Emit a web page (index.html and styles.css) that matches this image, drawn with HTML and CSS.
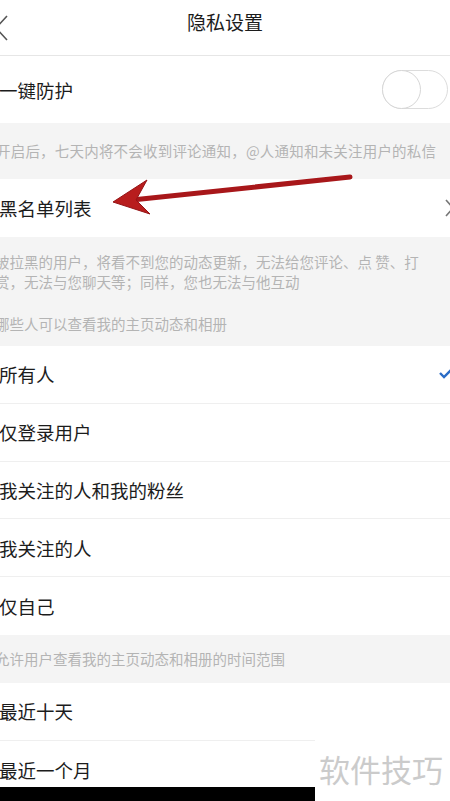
FILE: index.html
```html
<!DOCTYPE html>
<html>

<head>
    <title>隐私设置</title>
    <link rel="stylesheet" href="styles.css">
</head>

<body>
    <div class="page">
        <div class="nav">
            <svg class="back" width="12" height="28" viewBox="0 0 12 28">
                <polyline points="7,10 -4,22 7,34" transform="translate(0,-8)" fill="none" stroke="#555" stroke-width="1.6" />
            </svg>
            <div class="title">隐私设置</div>
            <span></span>
        </div>

        <div class="row row-tall">
            <span class="label">一键防护</span>
            <div class="switch"><span class="knob"></span></div>
        </div>
        <div class="tip tip-wide">开启后，七天内将不会收到评论通知，@人通知和未关注用户的私信</div>

        <div class="row">
            <span class="label">黑名单列表</span>
            <svg class="more" width="8" height="18" viewBox="0 0 8 18">
                <polyline points="1,1 8,9 1,17" fill="none" stroke="#777" stroke-width="1.6" />
            </svg>
        </div>
        <div class="tip desc">被拉黑的用户，将看不到您的动态更新，无法给您评论、点 赞、打<br>赏，无法与您聊天等；同样，您也无法与他互动</div>
        <div class="tip section">哪些人可以查看我的主页动态和相册</div>

        <div class="list">
            <div class="row opt">
                <span class="label">所有人</span>
                <svg class="check" width="14" height="12" viewBox="0 0 14 12">
                    <polyline points="1,5 5,9 13,1" fill="none" stroke="#2a6cc6" stroke-width="2.4" />
                </svg>
            </div>
            <div class="row opt"><span class="label">仅登录用户</span></div>
            <div class="row opt"><span class="label">我关注的人和我的粉丝</span></div>
            <div class="row opt"><span class="label">我关注的人</span></div>
            <div class="row opt"><span class="label">仅自己</span></div>
        </div>
        <div class="tip section-short">允许用户查看我的主页动态和相册的时间范围</div>

        <div class="list">
            <div class="row opt"><span class="label">最近十天</span></div>
            <div class="row opt"><span class="label">最近一个月</span></div>
        </div>

        <!-- annotation arrow drawn over the screenshot -->
        <svg class="arrow" width="450" height="240" viewBox="0 0 450 240">
            <line x1="350" y1="177" x2="132" y2="200" stroke="#a8171a" stroke-width="5" stroke-linecap="round" />
            <polygon points="113,202 147,180 136,200 150,214" fill="#b81d1d" stroke="#951416" stroke-width="1" />
        </svg>

        <div class="bottom-bar"></div>
        <div class="watermark">软件技巧</div>
    </div>
</body>

</html>
```

FILE: styles.css
```css
body {
    margin: 0;
    background: #fff;
    font-family: "Noto Sans CJK SC", "Noto Sans", sans-serif;
    color: #1c1c1c;
}

.page {
    position: relative;
    width: 450px;
    height: 801px;
    overflow: hidden;
    background: #f4f4f4;
}

.nav {
    display: grid;
    grid-template-columns: 60px 1fr 60px;
    align-items: center;
    height: 56px;
    background: #fff;
    border-bottom: 1px solid #e6e6e6;
    box-sizing: border-box;
}

.back {
    display: block;
}

.title {
    text-align: center;
    font-size: 19px;
    margin-top: -12px;
}

.row {
    display: flex;
    align-items: center;
    justify-content: space-between;
    height: 58px;
    background: #fff;
    box-sizing: border-box;
}

.row-tall {
    height: 67px;
    padding-right: 2px;
}

.label {
    font-size: 18.5px;
    margin-left: -1px;
}

.switch {
    position: relative;
    width: 66px;
    height: 39px;
    border: 1.5px solid #dcdcdc;
    border-radius: 20px;
    box-sizing: border-box;
}

.knob {
    position: absolute;
    left: -1.5px;
    top: -1.5px;
    width: 39px;
    height: 39px;
    border: 1.5px solid #d6d6d6;
    border-radius: 50%;
    box-sizing: border-box;
    background: #fff;
}

.more {
    margin-right: -3px;
}

.check {
    margin-right: -3px;
}

.tip {
    font-size: 14.5px;
    color: #b4b4b4;
    margin-left: -5px;
    line-height: 20px;
}

.tip-wide {
    height: 56px;
    display: flex;
    align-items: center;
    letter-spacing: 0.2px;
    white-space: nowrap;
    margin-left: -4px;
}

.desc {
    padding-top: 15px;
}

.section {
    padding: 22px 0 12px;
}

.section-short {
    height: 48px;
    display: flex;
    align-items: center;
}

.opt {
    height: 57.8px;
    border-bottom: 1px solid #efefef;
}

.opt:last-child {
    border-bottom: none;
}

.arrow {
    position: absolute;
    left: 0;
    top: 0;
}

.bottom-bar {
    position: absolute;
    left: 0;
    bottom: 0;
    width: 315px;
    height: 14px;
    background: #000;
}

.watermark {
    position: absolute;
    right: 0;
    bottom: 0;
    width: 135px;
    height: 64px;
    background: #fff;
    color: #cbcbcb;
    font-size: 31px;
    line-height: 64px;
    padding-left: 4px;
    box-sizing: border-box;
}
```
